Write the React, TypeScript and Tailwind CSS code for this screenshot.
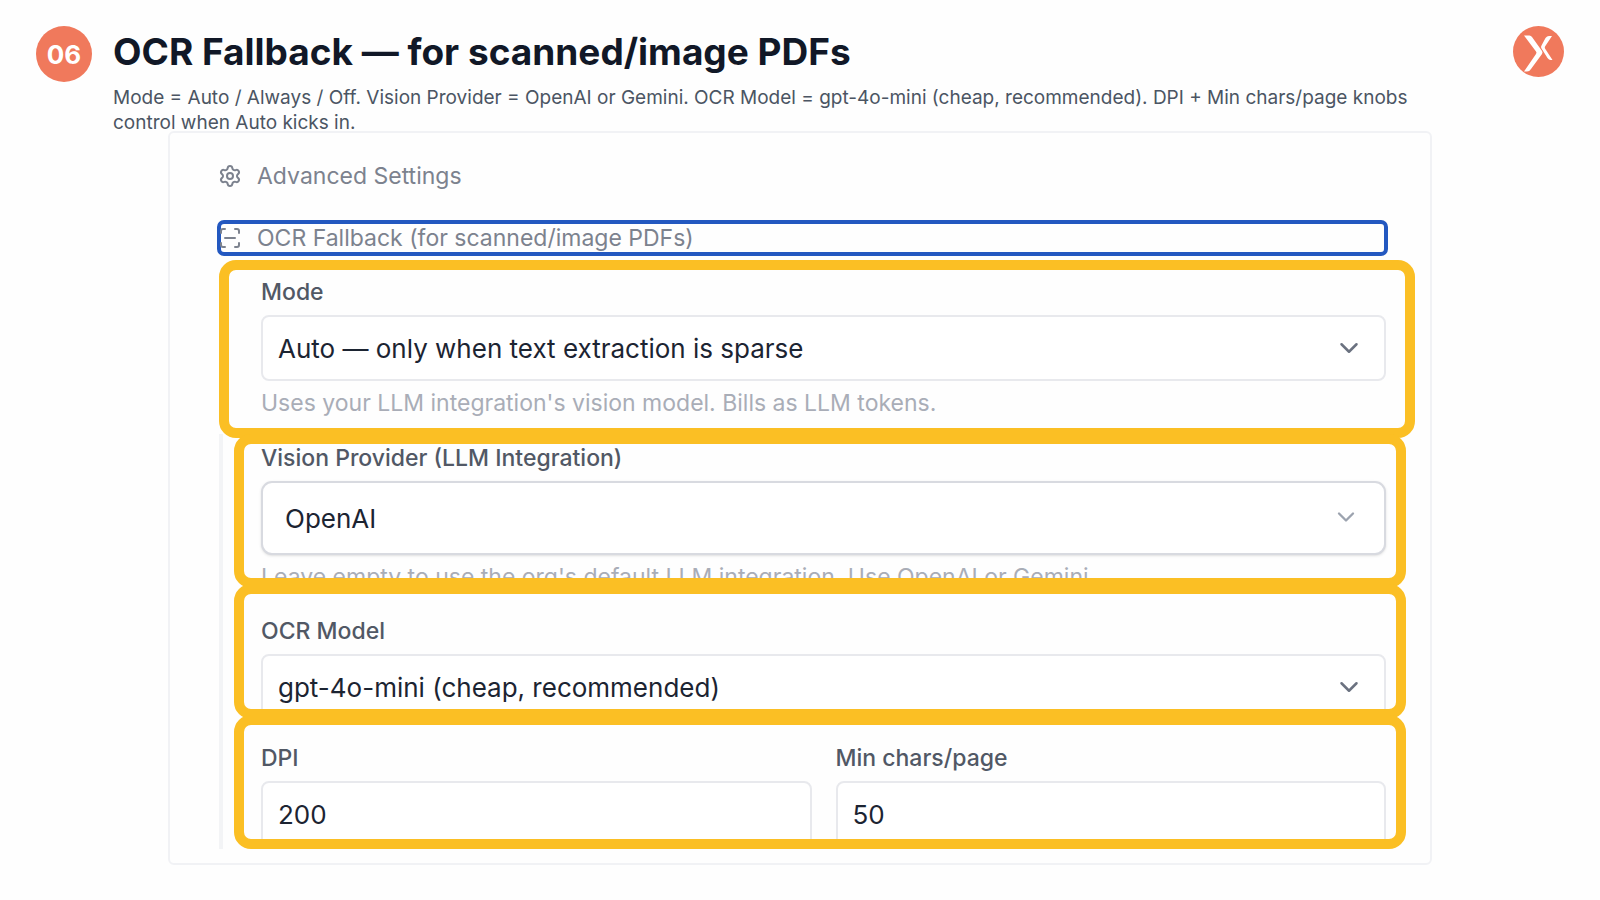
import { useId, type ReactNode } from "react";
import { ChevronDown, ScanLine, Settings } from "lucide-react";

const card = "rounded-[17px] border-10 border-[#fbbf24] overflow-hidden";

function Field({ label, htmlFor, children }: { label: string; htmlFor: string; children: ReactNode }) {
  return (
    <div className="flex min-w-0 flex-1 flex-col">
      <label htmlFor={htmlFor} className="mb-[9px] self-start text-[23px] leading-7 font-medium text-[#515865]">
        {label}
      </label>
      {children}
    </div>
  );
}

function SelectField({ label, option, large = false, help }: { label: string; option: string; large?: boolean; help?: string }) {
  const id = useId();
  return (
    <Field label={label} htmlFor={id}>
      <div className="relative shrink-0">
        <select
          id={id}
          className={
            large
              ? "block h-[74px] w-full appearance-none rounded-[11px] border-2 border-[#d8dae0] bg-white px-[22px] text-[26px] text-[#1c2432] shadow-sm"
              : "block h-[66px] w-full appearance-none rounded-lg border-2 border-[#e8e9ed] bg-white px-[15px] text-[26px] text-[#1c2432]"
          }
        >
          <option>{option}</option>
        </select>
        <ChevronDown
          aria-hidden="true"
          className={
            large
              ? "pointer-events-none absolute top-[22px] right-[26px] size-7 text-[#9ca3af]"
              : "pointer-events-none absolute top-[18px] right-[22px] size-[30px] text-[#6b7280]"
          }
        />
      </div>
      {help && <p className="mt-2 text-[23px] leading-7 text-[#a9adb7]">{help}</p>}
    </Field>
  );
}

function NumberField({ label, value }: { label: string; value: string }) {
  const id = useId();
  return (
    <Field label={label} htmlFor={id}>
      <input
        id={id}
        type="text"
        inputMode="numeric"
        defaultValue={value}
        className="block h-[66px] w-full shrink-0 rounded-lg border-2 border-[#e8e9ed] bg-white px-[15px] text-[26px] text-[#1c2432]"
      />
    </Field>
  );
}

function Logo() {
  return (
    <svg viewBox="0 0 51 51" className="size-[51px] shrink-0" role="img" aria-label="Logo">
      <circle cx="25.5" cy="25.5" r="25.5" fill="#f0795c" />
      <path d="M11 9.500h5.500q1.500 0 2.500 1.500L29 25q1 1.500 0 3L18 43q-1.500 2.500-4 2.500h-3L23 28q1-1.500 0-2.500z" fill="#fff" />
      <path d="M39 10h-3q-2 0-3.500 2L28.500 19.500q-1 1.500 0 3l6 9.500q1.500 2 3 2h2L32 22.500q-.5-1 0-2z" fill="#fff" />
    </svg>
  );
}

export default function App() {
  return (
    <main className="min-h-screen bg-[#fefefe] pb-9 font-['Inter',sans-serif]">
      <header className="flex items-start px-9 pt-[26px]">
        <div className="flex size-14 shrink-0 items-center justify-center rounded-full bg-[#f0795c] text-[26px] font-bold text-white">06</div>
        <div className="mr-16 ml-[21px] min-w-0 flex-1">
          <h1 className="pt-[2px] text-[37px] leading-[48px] font-bold text-[#111827]">OCR Fallback — for scanned/image PDFs</h1>
          <p className="mt-[9px] text-[19px] leading-[25px] text-[#4b5563]">
            Mode = Auto / Always / Off. Vision Provider = OpenAI or Gemini. OCR Model = gpt-4o-mini (cheap, recommended). DPI + Min
            chars/page knobs control when Auto kicks in.
          </p>
        </div>
        <Logo />
      </header>

      <section className="mx-42 -mt-1 rounded-md border-2 border-[#f1f2f5] pt-[29px] pr-[15px] pb-[14px] pl-[47px]">
        <h2 className="flex items-center gap-[15px] pl-px text-[23px] leading-7 text-[#7c828e]">
          <Settings aria-hidden="true" className="size-6" />
          Advanced Settings
        </h2>
        <h2 className="mt-[30px] mr-[27px] flex h-9 items-center gap-[15px] rounded-[7px] border-4 border-[#2358c0] text-[23px] leading-7 text-[#7c828e]">
          <ScanLine aria-hidden="true" className="-ml-[3px] size-6" />
          OCR Fallback (for scanned/image PDFs)
        </h2>

        <form className="mt-1 ml-[2px]">
          <div className={`${card} pt-2 pr-[19px] pb-[11px] pl-8`}>
            <SelectField
              label="Mode"
              option="Auto — only when text extraction is sparse"
              help="Uses your LLM integration's vision model. Bills as LLM tokens."
            />
          </div>
          <div className="-mt-1 border-l-4 border-[#f3f4f6] pr-[9px] pl-[11px]">
            <div className={`${card} h-[154px] pr-[10px] pl-[17px]`}>
              <SelectField
                large
                label="Vision Provider (LLM Integration)"
                option="OpenAI"
                help="Leave empty to use the org's default LLM integration. Use OpenAI or Gemini."
              />
            </div>
            <div className={`${card} -mt-1 h-[135px] pt-[23px] pr-[10px] pl-[17px]`}>
              <SelectField label="OCR Model" option="gpt-4o-mini (cheap, recommended)" />
            </div>
            <div className={`${card} -mt-1 flex h-[134px] gap-6 pt-[19px] pr-[10px] pl-[17px]`}>
              <NumberField label="DPI" value="200" />
              <NumberField label="Min chars/page" value="50" />
            </div>
          </div>
        </form>
      </section>
    </main>
  );
}
